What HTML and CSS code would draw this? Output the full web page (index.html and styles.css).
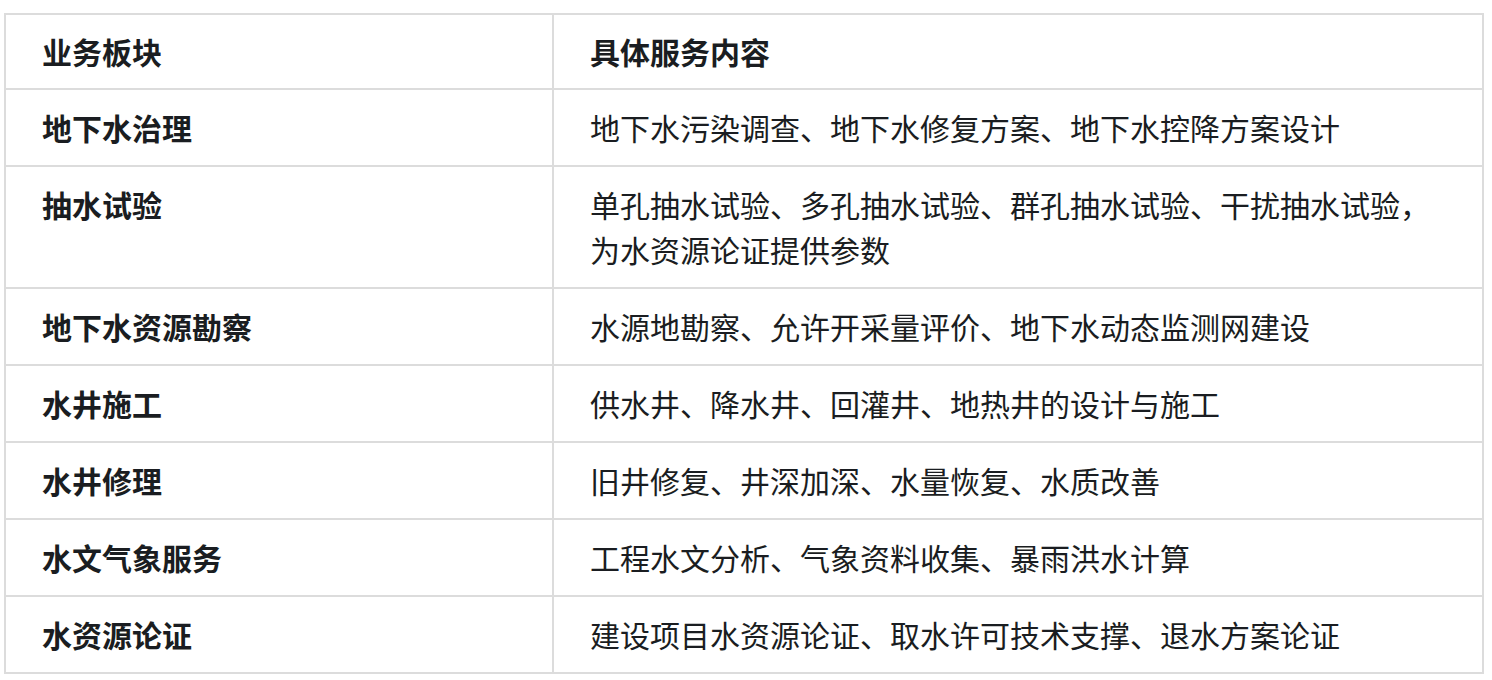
FILE: index.html
```html
<!DOCTYPE html>
<html lang="zh-CN">
<head>
<meta charset="utf-8">
<title>业务板块</title>
<link rel="stylesheet" href="styles.css">
</head>
<body>
<table class="svc-table">
  <colgroup>
    <col class="col-name">
    <col class="col-desc">
  </colgroup>
  <thead>
    <tr><th>业务板块</th><th>具体服务内容</th></tr>
  </thead>
  <tbody>
    <tr><td class="name">地下水治理</td><td>地下水污染调查、地下水修复方案、地下水控降方案设计</td></tr>
    <tr><td class="name">抽水试验</td><td>单孔抽水试验、多孔抽水试验、群孔抽水试验、干扰抽水试验，为水资源论证提供参数</td></tr>
    <tr><td class="name">地下水资源勘察</td><td>水源地勘察、允许开采量评价、地下水动态监测网建设</td></tr>
    <tr><td class="name">水井施工</td><td>供水井、降水井、回灌井、地热井的设计与施工</td></tr>
    <tr><td class="name">水井修理</td><td>旧井修复、井深加深、水量恢复、水质改善</td></tr>
    <tr><td class="name">水文气象服务</td><td>工程水文分析、气象资料收集、暴雨洪水计算</td></tr>
    <tr><td class="name">水资源论证</td><td>建设项目水资源论证、取水许可技术支撑、退水方案论证</td></tr>
  </tbody>
</table>
</body>
</html>
```

FILE: styles.css
```css
html, body {
  margin: 0;
  padding: 0;
  background: #ffffff;
}
body {
  padding: 13px 0 0 4px;
  font-family: "Noto Sans CJK SC", "Noto Sans", sans-serif;
  color: #1a1d21;
}
.svc-table {
  width: 1480px;
  border-collapse: collapse;
  table-layout: fixed;
  border: 2px solid #dcdcdc;
}
.col-name {
  width: 548px;
}
.svc-table th,
.svc-table td {
  border: 2px solid #dcdcdc;
  padding: 15px 36px;
  font-size: 30px;
  line-height: 45px;
  text-align: left;
  vertical-align: top;
  font-weight: 400;
}
.svc-table th,
.svc-table td.name {
  font-weight: 700;
}
.svc-table th {
  padding-top: 14px;
  padding-bottom: 14px;
}
```
